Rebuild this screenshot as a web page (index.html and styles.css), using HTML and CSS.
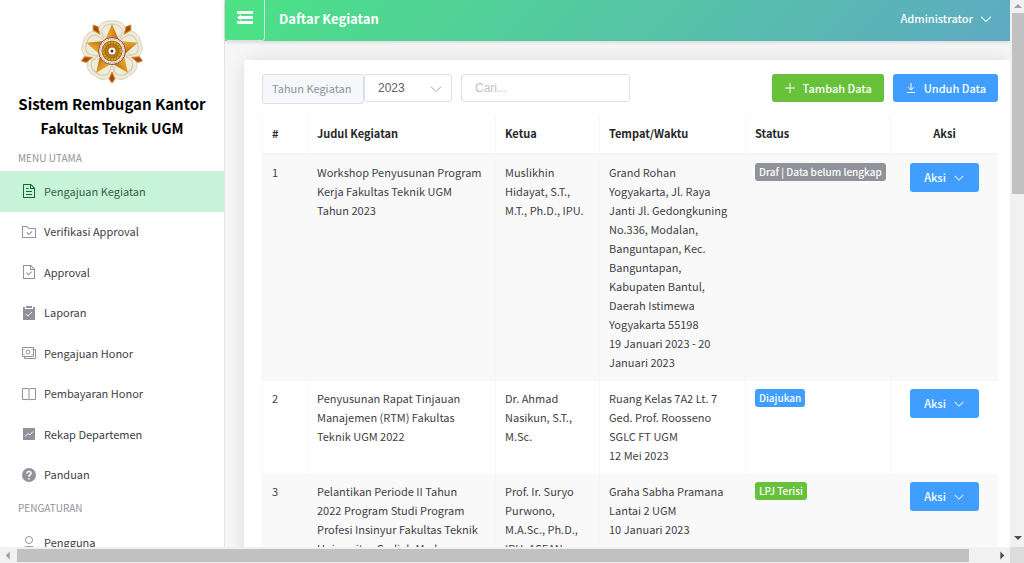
FILE: index.html
```html
<!DOCTYPE html>
<html lang="id">
<head>
<meta charset="utf-8">
<meta name="viewport" content="width=device-width, initial-scale=1">
<title>Daftar Kegiatan</title>
<link rel="stylesheet" href="styles.css">
</head>
<body>
<svg class="sprite" aria-hidden="true">
  <symbol id="chevron" viewBox="0 0 1024 1024"><path d="M831.872 340.864 512 652.672 192.128 340.864a30.592 30.592 0 0 0-42.752 0 29.12 29.12 0 0 0 0 41.6L489.664 714.24a32 32 0 0 0 44.672 0l340.288-331.712a29.12 29.12 0 0 0 0-41.728 30.592 30.592 0 0 0-42.752 0z"/></symbol>
</svg>
<div class="window">
  <div class="app">
    <aside class="sidebar">
      <div class="brand">
        <svg class="logo" viewBox="0 0 64 66" role="img" aria-label="Logo UGM">
          <defs>
            <linearGradient id="gold" x1="0" y1="0" x2="1" y2="0"><stop offset="0" stop-color="#eeb03a"/><stop offset="0.500" stop-color="#dc9422"/><stop offset="1" stop-color="#a85a12"/></linearGradient>
            <path id="petal" d="M32 33C20 26 16 17 19 9C21 4 27 2 32 3C37 2 43 4 45 9C48 17 44 26 32 33Z" fill="#f0ebd8" stroke="#ddd4ba"/>
            <path id="fold" d="M24 21C20 13 22 9 27 7C30 6 34 6 37 7C42 9 44 13 40 21" fill="none" stroke="#d3c9ac" stroke-width="1"/>
            <path id="leaf" d="M32 65L29 61L32 54L35 61Z" fill="#a8480f" stroke="#d08a2c" stroke-width="1"/>
            <path id="ray" d="M32 6L41 27L32 33L23 27Z" fill="url(#gold)"/>
          </defs>
          <g><use href="#petal"/><use href="#petal" transform="rotate(72 32 33)"/><use href="#petal" transform="rotate(144 32 33)"/><use href="#petal" transform="rotate(216 32 33)"/><use href="#petal" transform="rotate(288 32 33)"/></g>
          <g><use href="#fold"/><use href="#fold" transform="rotate(72 32 33)"/><use href="#fold" transform="rotate(144 32 33)"/><use href="#fold" transform="rotate(216 32 33)"/><use href="#fold" transform="rotate(288 32 33)"/></g>
          <g><use href="#leaf"/><use href="#leaf" transform="rotate(72 32 33)"/><use href="#leaf" transform="rotate(144 32 33)"/><use href="#leaf" transform="rotate(216 32 33)"/><use href="#leaf" transform="rotate(288 32 33)"/></g>
          <g><use href="#ray"/><use href="#ray" transform="rotate(72 32 33)"/><use href="#ray" transform="rotate(144 32 33)"/><use href="#ray" transform="rotate(216 32 33)"/><use href="#ray" transform="rotate(288 32 33)"/></g>
          <circle cx="32" cy="33" r="13.500" fill="#f6efe4" stroke="#8c4a3c" stroke-width="1"/>
          <circle cx="32" cy="33" r="12" fill="none" stroke="#b98878" stroke-width="1" stroke-dasharray="1 1"/>
          <circle cx="32" cy="33" r="10.500" fill="#a96d12"/>
          <circle cx="32" cy="33" r="8.500" fill="none" stroke="#dba52b" stroke-width="2" stroke-dasharray="2 1"/>
          <circle cx="32" cy="33" r="5.500" fill="none" stroke="#d69c28" stroke-width="1" stroke-dasharray="1 1"/>
          <circle cx="32" cy="33" r="3.500" fill="#fff"/><circle cx="32" cy="33" r="1.500" fill="#6b2424"/>
        </svg>
        <h1 class="brand-name">Sistem Rembugan Kantor</h1>
        <h2 class="brand-unit">Fakultas Teknik UGM</h2>
      </div>
      <nav>
        <p class="menu-label">MENU UTAMA</p>
        <div class="menu">
          <a class="menu-item active" href="#"><svg class="icon" viewBox="0 0 1024 1024"><path d="M832 384H576V128H192v768h640V384zm-26.496-64L640 154.496V320h165.504zM160 64h480l256 256v608a32 32 0 0 1-32 32H160a32 32 0 0 1-32-32V96a32 32 0 0 1 32-32zm160 448h384v64H320v-64zm0-192h160v64H320v-64zm0 384h384v64H320v-64z"/></svg>Pengajuan Kegiatan</a>
          <a class="menu-item" href="#"><svg class="icon" viewBox="0 0 1024 1024"><path d="M128 192v640h768V320H485.760L357.504 192H128zm-32-64h287.872l128.384 128H928a32 32 0 0 1 32 32v576a32 32 0 0 1-32 32H96a32 32 0 0 1-32-32V160a32 32 0 0 1 32-32zm414.080 502.144 180.992-180.992L736.320 494.400 510.080 720.640l-158.400-158.336 45.248-45.312L510.080 630.144z"/></svg>Verifikasi Approval</a>
          <a class="menu-item" href="#"><svg class="icon" viewBox="0 0 1024 1024"><path d="M805.504 320 640 154.496V320h165.504zM832 384H576V128H192v768h640V384zM160 64h480l256 256v608a32 32 0 0 1-32 32H160a32 32 0 0 1-32-32V96a32 32 0 0 1 32-32zm318.400 582.144 180.992-180.992L704.640 510.400 478.400 736.640 320 578.304l45.248-45.312L478.400 646.144z"/></svg>Approval</a>
          <a class="menu-item" href="#"><svg class="icon" viewBox="0 0 16 16"><path d="M2 2h2v2h8V2h2v13H2zM5 1h6v2H5z"/><path d="M5 9l2 2 4-4" fill="none" stroke="#fff"/></svg>Laporan</a>
          <a class="menu-item" href="#"><svg class="icon line" viewBox="0 0 16 16"><path d="M1.500 2.500h11v9h-11zM12.500 4.500h2v9h-11v-2M3 4v1M11 4v1M3 9v1M11 9v1"/><circle cx="7" cy="7" r="2"/></svg>Pengajuan Honor</a>
          <a class="menu-item" href="#"><svg class="icon line" viewBox="0 0 16 16"><path d="M1.500 2.500H6Q8 2.500 8 3.500Q8 2.500 10 2.500h4.500v11H10Q8 13.500 8 14Q8 13.500 6 13.500H1.500zM8 3v11"/></svg>Pembayaran Honor</a>
          <a class="menu-item" href="#"><svg class="icon" viewBox="0 0 16 16"><path d="M2 2h12v12H2z"/><path d="M4 10.500l3-3 2 1.500 3-3.500" fill="none" stroke="#fff"/></svg>Rekap Departemen</a>
          <a class="menu-item" href="#"><svg class="icon" viewBox="0 0 16 16"><circle cx="8" cy="8" r="7"/><path d="M6 6.500Q6 4.500 8 4.500T10 6.500Q10 7.500 8 8.500v1.200M8 11v1.500" fill="none" stroke="#fff" stroke-width="1.500"/></svg>Panduan</a>
        </div>
        <p class="menu-label second">PENGATURAN</p>
        <div class="menu-tail">
          <a class="menu-item" href="#"><svg class="icon line" viewBox="0 0 16 16"><circle cx="8" cy="5" r="3.500"/><path d="M2.500 15v-1q0-2.500 3-2.500h5q3 0 3 2.500v1"/></svg>Pengguna</a>
        </div>
      </nav>
    </aside>
    <div class="page">
      <header class="topbar">
        <button class="toggle" type="button" aria-label="Tutup menu"><svg viewBox="0 0 16 14"><path d="M0 0h16v3H0zM6 5h10v3H6zM0 10h16v3H0zM0 6.500l4-3V5h2v3H4v1.500z"/></svg></button>
        <h2 class="page-title">Daftar Kegiatan</h2>
        <button class="user" type="button">Administrator<svg viewBox="0 0 1024 1024"><use href="#chevron"/></svg></button>
      </header>
      <main class="card">
        <div class="toolbar">
          <div class="year">
            <label class="year-label" for="year">Tahun Kegiatan</label>
            <span class="select-wrap"><select id="year"><option>2023</option></select><svg class="select-arrow" viewBox="0 0 1024 1024"><use href="#chevron"/></svg></span>
          </div>
          <input class="search" type="text" placeholder="Cari..." aria-label="Cari">
          <div class="actions">
            <button class="btn green" type="button"><svg viewBox="0 0 12 12"><path d="M6 1v10M1 6h10"/></svg>Tambah Data</button>
            <button class="btn" type="button"><svg viewBox="0 0 12 12"><path d="M6 1v7M3 5l3 3 3-3M2 10.500h8"/></svg>Unduh Data</button>
          </div>
        </div>
        <table>
          <colgroup><col class="c-no"><col class="c-title"><col class="c-lead"><col class="c-place"><col class="c-status"><col></colgroup>
          <thead><tr><th>#</th><th>Judul Kegiatan</th><th>Ketua</th><th>Tempat/Waktu</th><th>Status</th><th class="center">Aksi</th></tr></thead>
          <tbody>
            <tr><td>1</td><td>Workshop Penyusunan Program Kerja Fakultas Teknik UGM Tahun 2023</td><td>Muslikhin Hidayat, S.T., M.T., Ph.D., IPU.</td><td>Grand Rohan Yogyakarta, Jl. Raya Janti Jl. Gedongkuning No.336, Modalan, Banguntapan, Kec. Banguntapan, Kabupaten Bantul, Daerah Istimewa Yogyakarta 55198<br>19 Januari 2023 - 20 Januari 2023</td><td><span class="tag gray">Draf | Data belum lengkap</span></td><td class="center"><button class="btn row-btn" type="button">Aksi<svg class="fill" viewBox="0 0 1024 1024"><use href="#chevron"/></svg></button></td></tr>
            <tr><td>2</td><td>Penyusunan Rapat Tinjauan Manajemen (RTM) Fakultas Teknik UGM 2022</td><td>Dr. Ahmad Nasikun, S.T., M.Sc.</td><td>Ruang Kelas 7A2 Lt. 7 Ged. Prof. Roosseno SGLC FT UGM<br>12 Mei 2023</td><td><span class="tag">Diajukan</span></td><td class="center"><button class="btn row-btn" type="button">Aksi<svg class="fill" viewBox="0 0 1024 1024"><use href="#chevron"/></svg></button></td></tr>
            <tr><td>3</td><td>Pelantikan Periode II Tahun 2022 Program Studi Program Profesi Insinyur Fakultas Teknik Universitas Gadjah Mada</td><td>Prof. Ir. Suryo Purwono, M.A.Sc., Ph.D., IPU, ASEAN</td><td>Graha Sabha Pramana Lantai 2 UGM<br>10 Januari 2023</td><td><span class="tag green">LPJ Terisi</span></td><td class="center"><button class="btn row-btn" type="button">Aksi<svg class="fill" viewBox="0 0 1024 1024"><use href="#chevron"/></svg></button></td></tr>
          </tbody>
        </table>
      </main>
    </div>
  </div>
  <div class="bar vertical"><svg viewBox="0 0 14 13"><path d="M3 8l4-4 4 4z" fill="#a3a3a3"/></svg><span class="thumb"></span><span class="rest"></span><svg viewBox="0 0 14 13"><path d="M3 2h8L7 6z" fill="#505050"/></svg></div>
  <div class="bar horizontal"><svg viewBox="0 0 17 16"><path d="M10 3v10L5 8z" fill="#a3a3a3"/></svg><span class="thumb"></span><span class="rest"></span><svg viewBox="0 0 17 16"><path d="M7 3v10l5-5z" fill="#505050"/></svg></div>
  <div class="corner"></div>
</div>
</body>
</html>
```
FILE: styles.css
```css
* { box-sizing: border-box; }
body {
  margin: 0;
  font-family: "Noto Sans CJK SC", "Noto Sans", sans-serif;
  font-size: 11px;
  line-height: 19px;
  color: #404145;
}
h1, h2, p { margin: 0; }
button { font-family: inherit; cursor: pointer; }
.sprite { display: none; }

.window {
  display: grid;
  grid-template-columns: minmax(0, 1fr) 14px;
  grid-template-rows: minmax(0, 1fr) 16px;
  height: 100vh;
  overflow: hidden;
}
.app { display: flex; overflow: hidden; background: #f6f6f6; }

.sidebar {
  flex: 0 0 225px;
  background: #fff;
  border-right: 1px solid #e4e4e6;
}
.brand {
  display: flex;
  flex-direction: column;
  align-items: center;
  padding-top: 18px;
  color: #000;
}
.logo { width: 64px; height: 66px; }
.brand-name { margin-top: 8px; font-size: 15px; line-height: 24px; }
.brand-unit { font-size: 14px; line-height: 24px; }
.menu-label {
  padding: 8px 18px 0;
  height: 31px;
  font-size: 10px;
  line-height: 19px;
  color: #909399;
}
.menu-label.second { padding-top: 3px; height: 27px; }
.menu { display: grid; grid-auto-rows: 1fr; height: 324px; }
.menu-tail { display: grid; grid-auto-rows: 41px; }
.menu-item {
  display: flex;
  align-items: center;
  gap: 7px;
  padding-left: 21px;
  color: #404145;
  text-decoration: none;
}
.menu-item.active { background: #c7f3d9; color: #33653f; }
.icon { width: 16px; height: 16px; fill: #909399; }
.icon.line { fill: none; stroke: #909399; }
.active .icon { fill: #146b2c; }

.page { flex: 1; min-width: 0; }
.topbar {
  display: flex;
  align-items: center;
  height: 41px;
  padding-right: 17px;
  background: linear-gradient(135deg, #4be284, #5eaac3);
  box-shadow: 0 1px 4px rgba(0, 0, 0, 0.15);
  color: #fff;
}
.toggle {
  display: grid;
  place-items: center;
  width: 40px;
  height: 41px;
  padding: 0 0 4px;
  background: #4be184;
  border: 1px solid #dcdfe6;
  border-top: 0;
  border-left: 0;
  border-radius: 0 0 3px 3px;
}
.toggle svg { width: 16px; height: 14px; fill: #fff; }
.page-title { flex: 1; padding: 0 0 5px 14px; font-size: 13px; }
.user {
  display: flex;
  align-items: center;
  gap: 6px;
  padding: 0 0 4px;
  border: 0;
  background: none;
  color: #fff;
  font-size: 11px;
  font-weight: 500;
  line-height: 19px;
}
.user svg { width: 14px; height: 14px; fill: #fff; stroke: #fff; stroke-width: 20; }

.card {
  margin: 19px 0 0 19px;
  padding: 14px 12px 20px 18px;
  background: #fff;
  border-radius: 3px 0 0;
  box-shadow: 0 0 18px rgba(0, 0, 0, 0.1);
}
.toolbar { display: flex; align-items: flex-start; gap: 9px; }
.year { display: flex; align-items: flex-start; }
.year-label {
  height: 30px;
  width: 102px;
  padding-left: 9px;
  line-height: 26px;
  background: #f5f7fa;
  border: 1px solid #dcdfe6;
  border-radius: 3px;
  color: #909399;
}
.select-wrap { position: relative; }
select, .search {
  height: 28px;
  padding: 0 13px;
  background: #fff;
  border: 1px solid #dcdfe6;
  border-radius: 3px;
  font-family: "Liberation Sans", Arial, sans-serif;
  font-size: 12px;
  color: #606266;
}
select { display: block; width: 88px; appearance: none; }
.select-arrow { position: absolute; right: 9px; top: 8px; width: 14px; height: 14px; fill: #a8abb2; pointer-events: none; }
.search { width: 169px; }
.search::placeholder { color: #bfc2c9; }
.actions { display: flex; gap: 9px; margin-left: auto; }
.btn {
  display: inline-flex;
  align-items: center;
  gap: 7px;
  height: 28px;
  padding: 0 12px;
  border: 0;
  border-radius: 3px;
  background: #409eff;
  color: #fff;
  font-size: 11px;
  font-weight: 500;
  line-height: 19px;
}
.btn svg { width: 12px; height: 12px; fill: none; stroke: #fff; }
.btn svg.fill { fill: #fff; stroke: #fff; stroke-width: 20; }
.btn.green, .tag.green { background: #67c23a; }
.btn.row-btn { height: 29px; padding: 0 14px; vertical-align: top; }

table { width: 100%; margin-top: 11px; border-collapse: separate; border-spacing: 0; table-layout: fixed; }
.c-no { width: 45px; }
.c-title { width: 188px; }
.c-lead { width: 104px; }
.c-place { width: 146px; }
.c-status { width: 145px; }
th, td { padding: 8px 9px 9px; text-align: left; vertical-align: top; border-left: 1px solid #f7f7f8; }
td:nth-child(2), td:nth-child(4) { padding-right: 11px; }
th { height: 40px; padding-top: 9px; color: #26272a; border-bottom: 2px solid #f4f4f5; }
tbody tr:nth-child(odd) { background: #f9f9f9; }
th.center, td.center { text-align: center; }
.tag {
  display: block;
  width: max-content;
  height: 18px;
  padding: 0 4px;
  border-radius: 3px;
  background: #409eff;
  color: #fff;
  font-size: 10px;
  font-weight: 500;
  line-height: 18px;
}
.tag.gray { background: #909399; }

.bar { display: flex; background: #f1f1f1; }
.bar .thumb { background: #c1c1c1; }
.vertical { flex-direction: column; padding-left: 2px; }
.vertical svg { width: 14px; height: 13px; margin-left: -1px; }
.vertical .thumb { flex: 181; }
.vertical .rest { flex: 340; }
.horizontal { padding: 2px 0 1px; }
.horizontal svg { width: 17px; height: 13px; }
.horizontal .thumb { flex: 952; }
.horizontal .rest { flex: 24; }
.corner { background: #dcdcdc; }
```
